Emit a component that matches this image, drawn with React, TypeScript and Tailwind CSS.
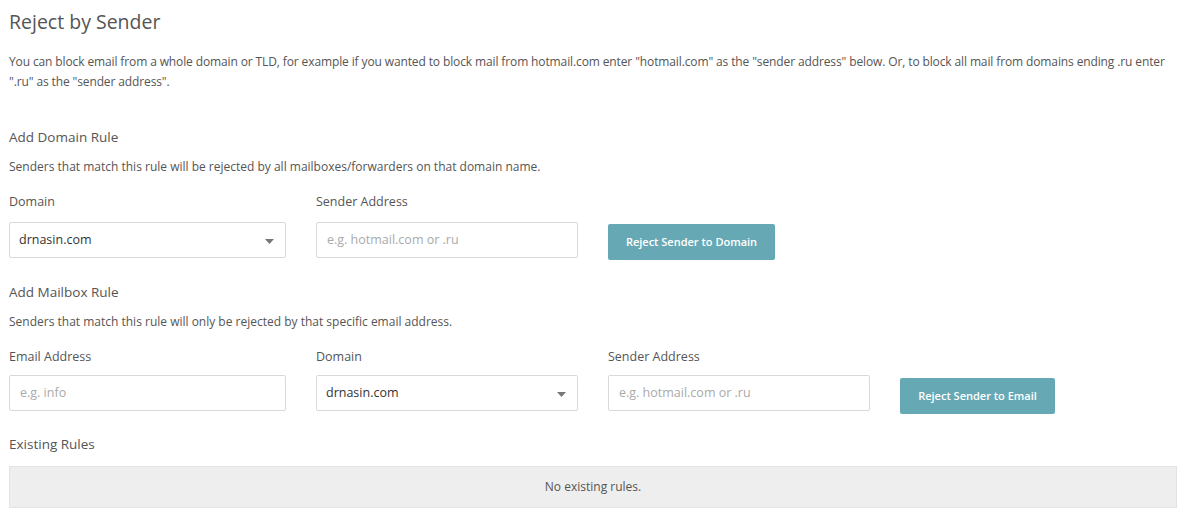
import React from "react";

const font = { fontFamily: '"Open Sans", "Noto Sans", sans-serif' };

function Caret() {
  return (
    <svg width="9" height="5" viewBox="0 0 9 5" className="absolute right-[11px] top-[16px]">
      <path d="M0 0 L9 0 L4.5 5 Z" fill="#777" />
    </svg>
  );
}

function SelectBox({ value, w }: { value: string; w: string }) {
  return (
    <div className={`relative ${w} h-[36px] border border-[#d9d9d9] rounded-[2px] bg-white flex items-center pl-[9px] text-[12.5px] text-[#333]`}>
      {value}
      <Caret />
    </div>
  );
}

function InputBox({ placeholder, w }: { placeholder: string; w: string }) {
  return (
    <div className={`${w} h-[36px] border border-[#d9d9d9] rounded-[2px] bg-white flex items-center pl-[10px] text-[12.5px] text-[#aaa]`}>
      {placeholder}
    </div>
  );
}

function Field({ label, children, w, mb }: { label: string; children: React.ReactNode; w: string; mb: string }) {
  return (
    <div className={`flex flex-col ${w}`}>
      <div className={`text-[12.5px] text-[#555] h-[20px] leading-[20px] ${mb}`}>{label}</div>
      {children}
    </div>
  );
}

export default function App() {
  return (
    <div className="w-[1187px] h-[518px] bg-white px-[9px] pt-[9px] text-[#555]" style={font}>
      <h1 className="text-[19.5px] leading-[26px] text-[#555] font-normal">Reject by Sender</h1>
      <p className="mt-[17px] text-[12px] leading-[20px] tracking-[-0.12px] text-[#555]">
        You can block email from a whole domain or TLD, for example if you wanted to block mail from hotmail.com enter "hotmail.com" as the "sender address" below. Or, to block all mail from domains ending .ru enter ".ru" as the "sender address".
      </p>
      <h2 className="mt-[35px] text-[13.5px] leading-[20px] text-[#555]">Add Domain Rule</h2>
      <p className="mt-[10px] text-[12px] leading-[20px]">Senders that match this rule will be rejected by all mailboxes/forwarders on that domain name.</p>
      <div className="mt-[15px] flex items-end">
        <Field label="Domain" w="w-[307px]" mb="mb-[10px]">
          <SelectBox value="drnasin.com" w="w-[277px]" />
        </Field>
        <Field label="Sender Address" w="w-[292px]" mb="mb-[10px]">
          <InputBox placeholder="e.g. hotmail.com or .ru" w="w-[262px]" />
        </Field>
        <button className="w-[167px] h-[36px] rounded-[2px] bg-[#66a9b4] text-white text-[11px] font-semibold mb-[-2px]">
          Reject Sender to Domain
        </button>
      </div>
      <h2 className="mt-[24px] text-[13.5px] leading-[20px] text-[#555]">Add Mailbox Rule</h2>
      <p className="mt-[10px] text-[12px] leading-[20px]">Senders that match this rule will only be rejected by that specific email address.</p>
      <div className="mt-[15px] flex items-end">
        <Field label="Email Address" w="w-[307px]" mb="mb-[8px]">
          <InputBox placeholder="e.g. info" w="w-[277px]" />
        </Field>
        <Field label="Domain" w="w-[292px]" mb="mb-[8px]">
          <SelectBox value="drnasin.com" w="w-[262px]" />
        </Field>
        <Field label="Sender Address" w="w-[292px]" mb="mb-[8px]">
          <InputBox placeholder="e.g. hotmail.com or .ru" w="w-[262px]" />
        </Field>
        <button className="w-[155px] h-[36px] rounded-[2px] bg-[#66a9b4] text-white text-[11px] font-semibold mb-[-3px]">
          Reject Sender to Email
        </button>
      </div>
      <h2 className="mt-[23px] text-[13.5px] leading-[20px] text-[#555]">Existing Rules</h2>
      <div className="mt-[12px] w-[1168px] h-[42px] bg-[#eeeeee] border border-[#e3e3e3] flex items-center justify-center text-[12px] text-[#555]">
        No existing rules.
      </div>
    </div>
  );
}
